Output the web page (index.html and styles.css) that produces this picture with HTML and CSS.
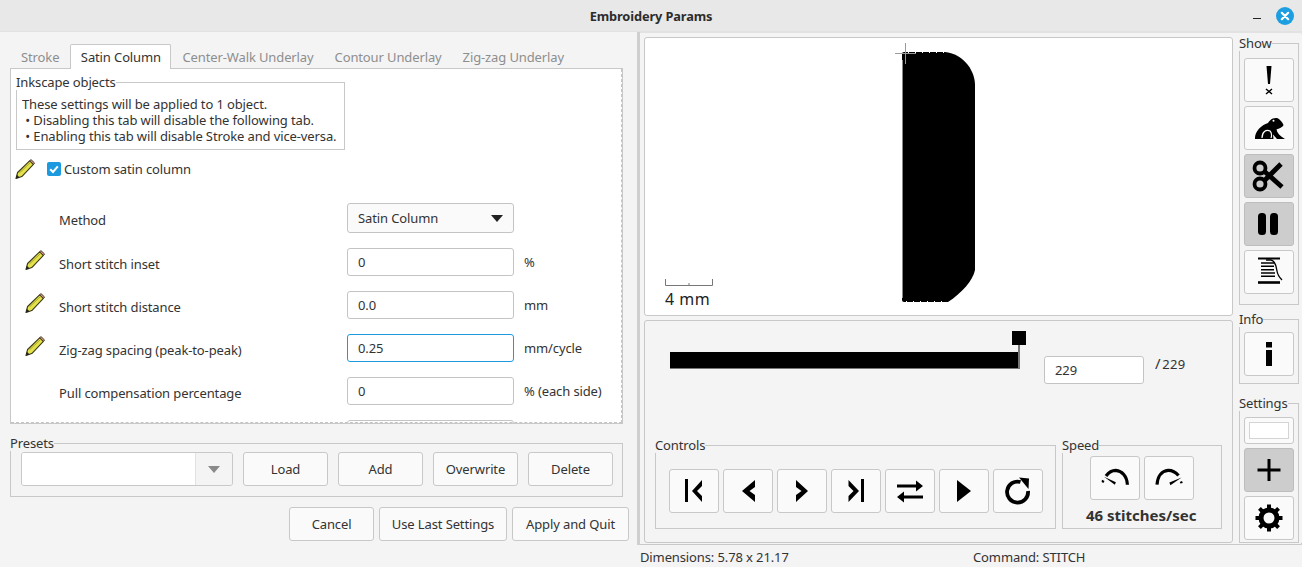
FILE: index.html
```html
<!DOCTYPE html>
<html lang="en">
<head>
  <meta charset="UTF-8">
  <title>Embroidery Params</title>
  <link rel="stylesheet" href="styles.css">
</head>
<body>

<svg class="defs" width="0" height="0">
  <symbol id="pencil" viewBox="0 0 20 20">
    <path d="M1 19.5 L2.6 13.5 L14.6 1.8 L18.4 5.4 L6.8 17.6 Z" fill="#e4e14a" stroke="#3a3a1a" stroke-width="1.1" stroke-linejoin="round"/>
    <path d="M14.6 1.8 L16 .6 L19.6 4 L18.4 5.4 Z" fill="#d98a8a" stroke="#3a3a1a" stroke-width=".9"/>
    <path d="M1 19.5 L1.9 15.8 L4.6 18.4 Z" fill="#222"/>
    <path d="M4.6 13.8 L15.6 3.4" stroke="#a9a72c" stroke-width="1"/>
  </symbol>
</svg>

<header class="titlebar">
  <span class="title">Embroidery Params</span>
  <span class="minimize"></span>
  <svg class="close" width="18" height="18" viewBox="0 0 18 18">
    <circle cx="9" cy="9" r="9" fill="#1b9fe0"/>
    <path d="M5.8 5.8 L12.2 12.2 M12.2 5.8 L5.8 12.2" stroke="#fff" stroke-width="2.2" stroke-linecap="round"/>
  </svg>
</header>

<div class="main">
  <section class="left">
    <nav class="tabs">
      <span class="tab">Stroke</span>
      <span class="tab active">Satin Column</span>
      <span class="tab">Center-Walk Underlay</span>
      <span class="tab">Contour Underlay</span>
      <span class="tab">Zig-zag Underlay</span>
    </nav>

    <div class="notebook">
      <fieldset class="group objects">
        <legend>Inkscape objects</legend>
        <p>These settings will be applied to 1 object.</p>
        <p>&nbsp;• Disabling this tab will disable the following tab.</p>
        <p>&nbsp;• Enabling this tab will disable Stroke and vice-versa.</p>
      </fieldset>

      <div class="toggle">
        <svg class="pencil" width="20" height="20"><use href="#pencil"/></svg>
        <span class="check">
          <svg width="14" height="14" viewBox="0 0 14 14"><path d="M3.2 7.2 L6 10 L10.8 4.4" fill="none" stroke="#fff" stroke-width="2"/></svg>
        </span>
        <span>Custom satin column</span>
      </div>

      <div class="row first">
        <span class="pencil-slot"></span>
        <label>Method</label>
        <div class="select"><span>Satin Column</span><i class="arrow"></i></div>
      </div>
      <div class="row">
        <svg class="pencil-slot" width="20" height="20"><use href="#pencil"/></svg>
        <label>Short stitch inset</label>
        <div class="field">0</div>
        <span class="unit">%</span>
      </div>
      <div class="row">
        <svg class="pencil-slot" width="20" height="20"><use href="#pencil"/></svg>
        <label>Short stitch distance</label>
        <div class="field">0.0</div>
        <span class="unit">mm</span>
      </div>
      <div class="row">
        <svg class="pencil-slot" width="20" height="20"><use href="#pencil"/></svg>
        <label>Zig-zag spacing (peak-to-peak)</label>
        <div class="field focus">0.25</div>
        <span class="unit">mm/cycle</span>
      </div>
      <div class="row">
        <span class="pencil-slot"></span>
        <label>Pull compensation percentage</label>
        <div class="field">0</div>
        <span class="unit">% (each side)</span>
      </div>
      <div class="row">
        <span class="pencil-slot"></span>
        <label></label>
        <div class="field"></div>
      </div>
      <div class="edge-right"></div>
      <div class="edge-bottom"></div>
    </div>

    <fieldset class="group presets">
      <legend>Presets</legend>
      <div class="presets-row">
        <div class="combo"><span class="combo-text"></span><span class="combo-btn"><i class="arrow grey"></i></span></div>
        <button>Load</button>
        <button>Add</button>
        <button>Overwrite</button>
        <button>Delete</button>
      </div>
    </fieldset>

    <div class="actions">
      <button class="cancel">Cancel</button>
      <button class="last">Use Last Settings</button>
      <button class="apply">Apply and Quit</button>
    </div>
  </section>

  <section class="right">
    <div class="panel">
      <div class="work">
        <div class="viewer">
          <svg width="587" height="277" viewBox="645 38 587 277">
            <path d="M902 54 Q902 52 904 52 H945 C962 54 974 68 975 84 V270 C973 280 962 293 948 302 H904 Q902 302 902 300 Z" fill="#000"/>
            <path d="M908 52.5 H945 M906 301.5 H946" stroke="#fff" stroke-width="1" stroke-dasharray="1 6"/>
            <path d="M902.5 60 V298" stroke="#8a8a8a" stroke-width="1"/>
            <path d="M905.5 43 V64 M895 53.5 H916" stroke="#9a9a9a" stroke-width="1"/>
            <path d="M665.5 279 V285.5 H712.5 V279 M689 283 V285" fill="none" stroke="#777" stroke-width="1"/>
          </svg>
          <span class="scale">4 mm</span>
        </div>

        <div class="player">
          <div class="seek">
            <svg width="358" height="40" viewBox="670 331 358 40">
              <rect x="670" y="352" width="349" height="17" fill="#000"/>
              <rect x="670" y="368" width="349" height="1" fill="#777"/>
              <rect x="1012" y="331" width="14" height="14" fill="#000"/>
              <rect x="1018" y="345" width="2" height="24" fill="#777"/>
            </svg>
            <div class="field count">229</div>
            <span class="total"><i>/</i> 229</span>
          </div>

          <div class="bottom-row">
            <fieldset class="group controls">
              <legend>Controls</legend>
              <div class="btns">
                <button class="icon-btn"><svg width="30" height="30"><path d="M6 3 V26 H9 V3 Z M23 4 L13 15 L23 26 V20 L18 15 L23 10 Z"/></svg></button>
                <button class="icon-btn"><svg width="30" height="30"><path d="M22 4 L9 15 L22 26 V19 L16.5 15 L22 11 Z"/></svg></button>
                <button class="icon-btn"><svg width="30" height="30"><path d="M9 4 L21 15 L9 26 V19 L14.5 15 L9 11 Z"/></svg></button>
                <button class="icon-btn"><svg width="30" height="30"><path d="M20 3 V26 H23 V3 Z M7.5 4 L18 15 L7.5 26 V20 L12.5 15 L7.5 10 Z"/></svg></button>
                <button class="icon-btn"><svg width="30" height="30"><path d="M2 8.5 H21 V4.5 L28 10 L21 15.5 V11.5 H2 Z"/><path d="M28 19.5 H9 V15.5 L2 21 L9 26.5 V22.5 H28 Z"/></svg></button>
                <button class="icon-btn"><svg width="30" height="30"><path d="M8 4 L22 15 L8 26 Z"/></svg></button>
                <button class="icon-btn"><svg width="30" height="30"><path d="M25 15 A10.5 10.5 0 1 1 17.5 6" fill="none" stroke="#000" stroke-width="3.8"/><path d="M16 1.5 L26 2.5 L25.5 13 Z"/></svg></button>
              </div>
            </fieldset>

            <fieldset class="group speed">
              <legend>Speed</legend>
              <div class="btns">
                <button class="icon-btn"><svg width="30" height="30"><path d="M6 13 C9 9 12.5 7.3 15.7 7.3 C22 7.8 27 13 27.4 21.7" fill="none" stroke="#000" stroke-width="3.2"/><path d="M4 13.8 L15.9 19.2 L14.8 21.8 Z"/><path d="M2 16.8 L4.5 18 L3.4 20 L1.6 19 Z"/></svg></button>
                <button class="icon-btn"><svg width="30" height="30"><path d="M3 21.7 C3.6 13 8 7.8 14 7.3 C18 7.2 22 9.5 24.5 12.5" fill="none" stroke="#000" stroke-width="3.2"/><path d="M27.6 14.4 L15.4 19.4 L16.4 22.2 Z"/><path d="M25.8 19 L28 18 L28.8 20 L26.4 20.6 Z"/></svg></button>
              </div>
              <p class="rate">46 stitches/sec</p>
            </fieldset>
          </div>
        </div>
      </div>

      <aside class="side">
        <fieldset class="group side-show">
          <legend>Show</legend>
          <button class="icon-btn side-btn"><svg width="30" height="36"><path d="M12.5 4 H17.5 L16 22 H14 Z"/><path d="M12 27 L18 32 M18 27 L12 32" stroke="#000" stroke-width="1.4"/></svg></button>
          <button class="icon-btn side-btn"><svg width="34" height="30" viewBox="0 0 34 30"><path d="M3 26 C2.5 19 9 12 16 10 C18 6 22 4.5 25 5 C28 6 31 10 31.5 12 C31 14 27 15.5 24.5 16.5 C25 20 28 23 33 26 H25 L21 21.5 L21.5 26 Z"/><path d="M10 25 C10 19 14 16 18 18 C20 20 20 22 19 25" fill="none" stroke="#fff" stroke-width="1.2"/><circle cx="21.5" cy="7.8" r="1" fill="#fff"/></svg></button>
          <button class="icon-btn side-btn pressed"><svg width="34" height="34" viewBox="0 0 34 34"><circle cx="8" cy="9" r="5.5" fill="none" stroke="#000" stroke-width="3.8"/><circle cx="8" cy="25" r="5.5" fill="none" stroke="#000" stroke-width="3.8"/><path d="M12 12 L30 28 M12 22 L29 5" stroke="#000" stroke-width="4.8"/></svg></button>
          <button class="icon-btn side-btn pressed"><svg width="30" height="30"><rect x="4" y="4" width="8" height="22" rx="3.5"/><rect x="16" y="4" width="8" height="22" rx="3.5"/></svg></button>
          <button class="icon-btn side-btn"><svg width="30" height="34"><path d="M4 3.5 H26" stroke="#000" stroke-width="2"/><path d="M7 8 H20 M7 11.3 H20 M7 14.7 H20 M7 18 H21 M7 21.3 H21" stroke="#000" stroke-width="1.5"/><path d="M4 27.5 H26" stroke="#000" stroke-width="2.6"/><path d="M12 5 H17 C22 6 22 12 23 16 C23.5 20 25 22 28 25" fill="none" stroke="#000" stroke-width="1.3"/></svg></button>
        </fieldset>

        <fieldset class="group side-info">
          <legend>Info</legend>
          <button class="icon-btn side-btn"><svg width="30" height="30"><rect x="12" y="3" width="6" height="5.5"/><rect x="12" y="11" width="6" height="16"/></svg></button>
        </fieldset>

        <fieldset class="group side-settings">
          <legend>Settings</legend>
          <button class="icon-btn colour"><span></span></button>
          <button class="icon-btn side-btn pressed"><svg width="30" height="30"><path d="M3.5 13.5 H26.5 V16.5 H3.5 Z M13.5 4 H16.5 V26 H13.5 Z"/></svg></button>
          <button class="icon-btn side-btn"><svg width="30" height="30" viewBox="0 0 30 30"><circle cx="15" cy="15" r="8" fill="none" stroke="#000" stroke-width="5"/><path d="M13 1.5 H17 V6 H13 Z M13 24 H17 V28.5 H13 Z M1.5 13 H6 V17 H1.5 Z M24 13 H28.5 V17 H24 Z"/><path d="M13 1.5 H17 V6 H13 Z M13 24 H17 V28.5 H13 Z" transform="rotate(45 15 15)"/><path d="M13 1.5 H17 V6 H13 Z M13 24 H17 V28.5 H13 Z" transform="rotate(-45 15 15)"/></svg></button>
        </fieldset>
      </aside>
    </div>

    <footer class="status">
      <span class="dims">Dimensions: 5.78 x 21.17</span>
      <span>Command: STITCH</span>
    </footer>
  </section>
</div>

</body>
</html>
```

FILE: styles.css
```css
* { box-sizing: border-box; }

html, body {
  margin: 0;
  height: 567px;
  overflow: hidden;
}

body {
  display: flex;
  flex-direction: column;
  background-color: #f4f4f4;
  color: #333;
  font-family: "Noto Sans", sans-serif;
  font-size: 13px;
  letter-spacing: -0.12px;
}

.defs { position: absolute; }

p { margin: 0; }

/* title bar */
.titlebar {
  position: relative;
  height: 32px;
  background-color: #e8e8e8;
  display: flex;
  align-items: center;
  justify-content: center;
  border-bottom: 1px solid #e2e2e2;
}
.title { font-weight: 700; font-size: 12.8px; color: #2c2c2c; }
.minimize {
  position: absolute;
  left: 1253px;
  top: 18px;
  width: 8px;
  height: 1px;
  background-color: #222;
}
.close { position: absolute; left: 1276px; top: 7px; }

.main { display: flex; height: 535px; }

/* left side */
.left {
  width: 640px;
  padding: 12px 0 0 10px;
  border-right: 3px solid #cfcfcf;
  height: 513px;
  flex: none;
}

.tabs { display: flex; height: 24px; padding-left: 1px; }
.tab {
  padding: 4px 10px 0;
  color: #8e8e8e;
  margin-right: 1px;
  white-space: nowrap;
}
.tab.active {
  background-color: #fff;
  color: #333;
  border: 1px solid #c8c8c8;
  border-bottom: none;
  border-radius: 2px 2px 0 0;
  height: 25px;
  position: relative;
  z-index: 1;
  padding: 3px 9.5px 0;
}

.notebook {
  position: relative;
  width: 613px;
  height: 356px;
  background-color: #fff;
  border: 1px solid #c8c8c8;
  overflow: hidden;
  padding: 5px 5px 0;
}
.edge-right {
  position: absolute;
  right: 0;
  top: 0;
  bottom: 0;
  border-right: 1px dashed #c4c4c4;
}
.edge-bottom {
  position: absolute;
  left: 0;
  right: 0;
  bottom: 0;
  border-bottom: 1px dashed #c4c4c4;
}

.group {
  margin: 0;
  min-width: 0;
  border: 1px solid #c8c8c8;
  padding: 0;
}
.group legend { padding: 0; line-height: 16px; color: #333; }

.objects {
  width: 329px;
  height: 76px;
  padding: 6px 0 0 5px;
  line-height: 16px;
}
.objects legend { margin-left: -6px; }

.toggle {
  display: flex;
  align-items: center;
  height: 24px;
  margin-top: 7px;
}
.pencil { margin-left: -1px; margin-right: 12px; }
.check {
  width: 14px;
  height: 14px;
  background-color: #1c9ae0;
  border-radius: 2px;
  margin-right: 3px;
  display: flex;
}

.row {
  display: flex;
  align-items: center;
  height: 43px;
}
.row.first { margin-top: 20px; height: 36px; margin-bottom: 11px; }
.row.first + .row { margin-top: -8px; }
.row.first label { margin-top: 1px; }
.pencil-slot { width: 20px; height: 20px; margin-left: 9px; flex: none; margin-top: -3px; }
.row label {
  width: 302px;
  padding-left: 14px;
  margin-top: 5px;
  flex: none;
  white-space: nowrap;
}
.field {
  width: 167px;
  height: 28px;
  background-color: #fff;
  border: 1px solid #c4c4c4;
  border-radius: 3px;
  padding: 0 10px;
  line-height: 26px;
  flex: none;
}
.field.focus { border-color: #1c9ae0; }
.unit { margin-left: 10px; white-space: nowrap; }

.select {
  width: 167px;
  height: 30px;
  background-color: #fafafa;
  border: 1px solid #c4c4c4;
  border-radius: 3px;
  display: flex;
  align-items: center;
  justify-content: space-between;
  padding: 0 10px;
  margin-top: -2px;
}
.arrow {
  width: 0;
  height: 0;
  border-left: 6px solid transparent;
  border-right: 6px solid transparent;
  border-top: 7px solid #222;
}
.arrow.grey { border-top-color: #8a8a8a; }

button {
  font: inherit;
  letter-spacing: inherit;
  color: #333;
  background-color: #fafafa;
  border: 1px solid #c8c8c8;
  border-radius: 3px;
  padding: 0;
}

.presets {
  width: 613px;
  height: 62px;
  margin-top: 11px;
  padding: 1px 9px 0 10px;
}
.presets legend { margin-left: -11px; }
.presets-row { display: flex; height: 34px; gap: 10px; }
.presets-row button { width: 85px; }
.combo {
  display: flex;
  width: 212px;
  border: 1px solid #c8c8c8;
  border-radius: 3px;
  overflow: hidden;
}
.combo-text { flex: 1; background-color: #fff; }
.combo-btn {
  width: 37px;
  background-color: #f4f4f4;
  border-left: 1px solid #e2e2e2;
  display: flex;
  align-items: center;
  justify-content: center;
}

.actions {
  display: flex;
  gap: 5px;
  justify-content: flex-end;
  width: 619px;
  height: 34px;
  margin-top: 10px;
}
.actions button { height: 34px; }
.cancel { width: 85px; }
.last { width: 128px; }
.apply { width: 117px; }

/* right side */
.right { flex: 1; display: flex; flex-direction: column; }

.panel {
  display: flex;
  height: 513px;
  border: 1px solid #c8c8c8;
  border-left: none;
  border-top-color: #e2e2e2;
  border-radius: 0 3px 3px 0;
  padding: 4px 2px 0 4px;
}
.work { width: 589px; flex: none; }

.viewer {
  position: relative;
  width: 589px;
  height: 279px;
  background-color: #fff;
  border: 1px solid #c8c8c8;
  border-radius: 3px;
}
.viewer svg { display: block; }
.scale {
  position: absolute;
  left: 20px;
  top: 250px;
  font-size: 16px;
  color: #222;
  letter-spacing: 0.5px;
}

.player {
  margin-top: 4px;
  width: 589px;
  height: 223px;
  border: 1px solid #c8c8c8;
  border-radius: 3px;
  padding: 10px 10px 0;
}
.seek { display: flex; align-items: flex-start; height: 90px; padding-left: 15px; }
.seek svg { flex: none; }
.count { width: 100px; height: 28px; margin: 25px 0 0 16px; }
.total { margin: 22px 0 0 11px; letter-spacing: 0.2px; word-spacing: -2px; }
.total i { font-style: normal; font-size: 15px; }

.bottom-row { display: flex; gap: 6px; margin-top: 16px; align-items: flex-end; }

.controls { width: 401px; height: 92px; padding: 16px 0 0 13px; }
.controls legend { margin-left: -14px; }
.speed { width: 160px; height: 92px; padding: 3px 0 0 27px; }
.speed legend { margin-left: -28px; }
.btns { display: flex; gap: 4px; }

.icon-btn {
  display: flex;
  align-items: center;
  justify-content: center;
  width: 50px;
  height: 44px;
  flex: none;
}
.icon-btn svg { display: block; }
.rate {
  font-weight: 700;
  font-size: 15px;
  letter-spacing: 0;
  margin: 5px 0 0 -4px;
  white-space: nowrap;
}

.side { width: 61px; margin-left: 6px; flex: none; }
.side .group { width: 60px; padding: 0 0 0 4px; }
.side .group legend { margin-left: -5px; }
.side-btn { margin-bottom: 4px; }
.side .side-show { height: 270px; padding-top: 7px; margin-top: -2px; }
.side .side-info { height: 73px; margin-top: 6px; padding-top: 5px; }
.side .side-settings { height: 148px; margin-top: 11px; padding-top: 6px; }
.pressed { background-color: #cdcdcd; border-color: #bdbdbd; }
.colour { height: 27px; margin-bottom: 4px; }
.colour span { width: 40px; height: 17px; background-color: #fff; border: 1px solid #d4d4d4; }

.status {
  display: flex;
  height: 22px;
  align-items: center;
  padding-top: 2px;
}
.dims { width: 333px; }
```
